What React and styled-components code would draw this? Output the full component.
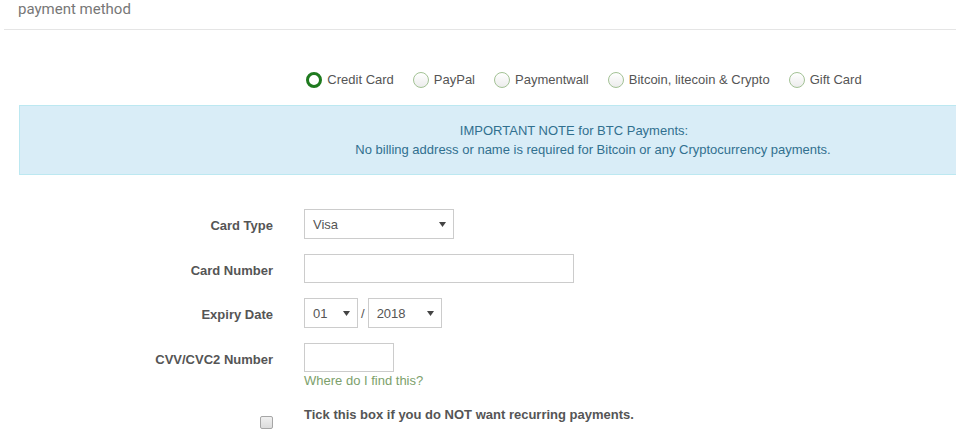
import React from "react";
import styled, { createGlobalStyle } from "styled-components";

const GlobalStyle = createGlobalStyle`
  html, body {
    margin: 0;
    padding: 0;
    background: #fff;
    overflow: hidden;
  }
  body {
    font-family: "Liberation Sans", Arial, sans-serif;
    font-size: 13px;
    color: #555;
  }
`;

const Page = styled.div`
  width: 956px;
  overflow: hidden;
`;

const Header = styled.div`
  margin-left: 4px;
  padding-left: 14px;
  height: 29px;
  border-bottom: 1px solid #e5e5e5;
  h2 {
    margin: 0;
    font-family: Roboto, "Liberation Sans", sans-serif;
    font-weight: 400;
    font-size: 15px;
    line-height: 18px;
    color: #777;
  }
`;

const Content = styled.div`
  margin-left: 19px;
  width: 1130px;
`;

const RadioRow = styled.div`
  display: flex;
  justify-content: center;
  align-items: center;
  gap: 19px;
  margin-top: 42px;
  height: 16px;
`;

const RadioItem = styled.label`
  display: flex;
  align-items: center;
  gap: 5px;
  line-height: 16px;
  color: #555;
`;

const RadioDot = styled.span`
  box-sizing: border-box;
  width: 16px;
  height: 16px;
  border-radius: 50%;
  border: ${(p) => (p.$checked ? "3px solid #1f7a1f" : "1px solid #a3c295")};
  background: ${(p) =>
    p.$checked ? "#fff" : "linear-gradient(#ffffff, #ececec)"};
`;

const Alert = styled.div`
  margin-top: 17px;
  padding: 15px;
  border: 1px solid #bce8f1;
  background: #d9edf7;
  color: #31708f;
  text-align: center;
  line-height: 19px;
`;

const NoteLine = styled.div`
  position: relative;
  left: ${(p) => p.$shift}px;
`;

const Form = styled.div`
  display: grid;
  grid-template-columns: 254px 1fr;
  column-gap: 31px;
  row-gap: 15px;
  margin-top: 34px;
`;

const Label = styled.div`
  text-align: right;
  font-weight: bold;
  line-height: 16px;
  padding-top: 9px;
  color: #555;
`;

const Field = styled.div`
  display: flex;
  flex-direction: column;
  align-items: flex-start;
`;

const Inline = styled.div`
  display: flex;
  align-items: center;
`;

const Select = styled.div`
  box-sizing: border-box;
  width: ${(p) => p.$w}px;
  height: 30px;
  border: 1px solid #ccc;
  display: flex;
  align-items: center;
  justify-content: space-between;
  padding: 0 7px 0 8px;
  color: #555;
  background: #fff;
`;

const Input = styled.div`
  box-sizing: border-box;
  width: ${(p) => p.$w}px;
  height: 29px;
  border: 1px solid #ccc;
  background: #fff;
`;

const Slash = styled.span`
  margin: 0 3px;
  color: #555;
`;

const HelpLink = styled.a`
  color: #7d9f6b;
  text-decoration: none;
  line-height: 18px;
`;

const CheckCell = styled.div`
  display: flex;
  justify-content: flex-end;
  padding-top: 11px;
`;

const CheckBox = styled.span`
  box-sizing: border-box;
  width: 13px;
  height: 13px;
  border: 1px solid #a6a6a6;
  border-radius: 2px;
  background: linear-gradient(#f0f0f0, #dcdcdc);
`;

const CheckText = styled.div`
  font-weight: bold;
  line-height: 20px;
  color: #555;
`;

function Arrow() {
  return (
    <svg width="7" height="5" viewBox="0 0 7 5">
      <path d="M0 0 L7 0 L3.5 5 Z" fill="#444" />
    </svg>
  );
}

const methods = [
  { label: "Credit Card", checked: true },
  { label: "PayPal" },
  { label: "Paymentwall" },
  { label: "Bitcoin, litecoin & Crypto" },
  { label: "Gift Card" },
];

export default function App() {
  return (
    <Page>
      <GlobalStyle />
      <Header>
        <h2>payment method</h2>
      </Header>
      <Content>
        <RadioRow>
          {methods.map((m) => (
            <RadioItem key={m.label}>
              <RadioDot $checked={m.checked} />
              {m.label}
            </RadioItem>
          ))}
        </RadioRow>
        <Alert>
          <NoteLine $shift={-10}>IMPORTANT NOTE for BTC Payments:</NoteLine>
          <NoteLine $shift={9}>
            No billing address or name is required for Bitcoin or any
            Cryptocurrency payments.
          </NoteLine>
        </Alert>
        <Form>
          <Label>Card Type</Label>
          <Field>
            <Select $w={150}>
              Visa
              <Arrow />
            </Select>
          </Field>

          <Label>Card Number</Label>
          <Field>
            <Input $w={270} />
          </Field>

          <Label>Expiry Date</Label>
          <Field>
            <Inline>
              <Select $w={54}>
                01
                <Arrow />
              </Select>
              <Slash>/</Slash>
              <Select $w={74}>
                2018
                <Arrow />
              </Select>
            </Inline>
          </Field>

          <Label>CVV/CVC2 Number</Label>
          <Field>
            <Input $w={90} />
            <HelpLink href="#">Where do I find this?</HelpLink>
          </Field>

          <CheckCell>
            <CheckBox />
          </CheckCell>
          <CheckText>Tick this box if you do NOT want recurring payments.</CheckText>
        </Form>
      </Content>
    </Page>
  );
}
